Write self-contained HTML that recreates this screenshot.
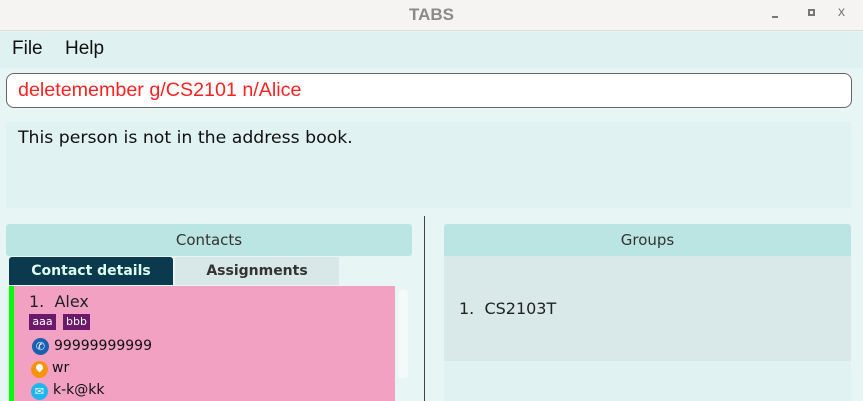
<!DOCTYPE html>
<html><head><style>
*{margin:0;padding:0;box-sizing:border-box}
body{width:863px;height:401px;overflow:hidden;background:#e8f5f5;font-family:"DejaVu Sans","Liberation Sans",sans-serif;position:relative}
.a{position:absolute}
</style></head><body>
<div class="a" style="left:0;top:0;width:863px;height:31px;background:#f5f4f2;border-bottom:1px solid #ddd"></div>
<div class="a" style="left:0;top:5px;width:863px;text-align:center;font-size:17px;color:#8a8a8a;font-weight:bold;font-family:'Liberation Sans',sans-serif">TABS</div>
<div class="a" style="left:772px;top:16px;width:6px;height:2px;background:#777"></div>
<div class="a" style="left:808px;top:9px;width:7px;height:7px;border:2px solid #777"></div>
<div class="a" style="left:838px;top:3px;font-size:14px;color:#777;font-family:'Liberation Sans',sans-serif">x</div>
<div class="a" style="left:0;top:32px;width:863px;height:36px;background:#dff1f1"></div>
<div class="a" style="left:12px;top:38px;font-size:19px;color:#111;font-family:'Liberation Sans',sans-serif">File</div>
<div class="a" style="left:65px;top:38px;font-size:19px;color:#111;font-family:'Liberation Sans',sans-serif">Help</div>
<div class="a" style="left:6px;top:73px;width:846px;height:35px;background:#fff;border:1px solid #666;border-radius:8px"></div>
<div class="a" style="left:18px;top:79px;font-size:19.7px;color:#f22;font-family:'Liberation Sans',sans-serif">deletemember g/CS2101 n/Alice</div>
<div class="a" style="left:6px;top:122px;width:845px;height:86px;background:#e0f2f2"></div>
<div class="a" style="left:18px;top:128px;font-size:17.3px;color:#111">This person is not in the address book.</div>
<div class="a" style="left:424px;top:216px;width:1px;height:185px;background:#444"></div>
<div class="a" style="left:6px;top:224px;width:406px;height:32px;background:#bbe5e3;border-radius:3px"></div>
<div class="a" style="left:6px;top:231px;width:406px;text-align:center;font-size:15px;color:#333">Contacts</div>
<div class="a" style="left:9px;top:257px;width:164px;height:28px;background:#0b3a4e;border-radius:3px 3px 0 0;color:#dfe;font-weight:bold;font-size:14px;text-align:center;line-height:28px">Contact details</div>
<div class="a" style="left:175px;top:257px;width:164px;height:28px;background:#d8e8e8;color:#333;font-weight:bold;font-size:14px;text-align:center;line-height:28px">Assignments</div>
<div class="a" style="left:9px;top:286px;width:386px;height:115px;background:#f3a1c3"></div>
<div class="a" style="left:9px;top:286px;width:5px;height:115px;background:#0f0"></div>
<div class="a" style="left:398px;top:290px;width:10px;height:88px;background:#f4fafa;border-radius:3px"></div>
<div class="a" style="left:29px;top:292px;font-size:16px;color:#222">1.&nbsp; Alex</div>
<div class="a" style="left:29px;top:314px;width:27px;height:16px;background:#6b1a6b;color:#fff;font-size:11px;text-align:center;line-height:16px">aaa</div>
<div class="a" style="left:63px;top:314px;width:27px;height:16px;background:#6b1a6b;color:#fff;font-size:11px;text-align:center;line-height:16px">bbb</div>
<div class="a" style="left:32px;top:338px;width:17px;height:17px;border-radius:50%;background:#1b5fb0;color:#fff;font-size:11px;text-align:center;line-height:17px">✆</div>
<div class="a" style="left:54px;top:338px;font-size:14px;color:#111">99999999999</div>
<div class="a" style="left:31px;top:361px;width:17px;height:17px;border-radius:50%;background:#f4930f"></div>
<div class="a" style="left:36px;top:364px;width:7px;height:7px;border-radius:50% 50% 50% 0;transform:rotate(-45deg);background:#fff"></div>
<div class="a" style="left:52px;top:360px;font-size:14px;color:#111">wr</div>
<div class="a" style="left:31px;top:383px;width:17px;height:17px;border-radius:50%;background:#1fb5ee;color:#fff;font-size:11px;text-align:center;line-height:17px">✉</div>
<div class="a" style="left:53px;top:382px;font-size:14px;color:#111">k-k@kk</div>
<div class="a" style="left:444px;top:224px;width:407px;height:32px;background:#bbe5e3;border-radius:3px 3px 0 0"></div>
<div class="a" style="left:444px;top:231px;width:407px;text-align:center;font-size:15px;color:#333">Groups</div>
<div class="a" style="left:444px;top:256px;width:407px;height:105px;background:#d9e8e8"></div>
<div class="a" style="left:444px;top:361px;width:407px;height:40px;background:#e0f2f2"></div>
<div class="a" style="left:459px;top:299px;font-size:16px;color:#222">1.&nbsp; CS2103T</div>
</body></html>
